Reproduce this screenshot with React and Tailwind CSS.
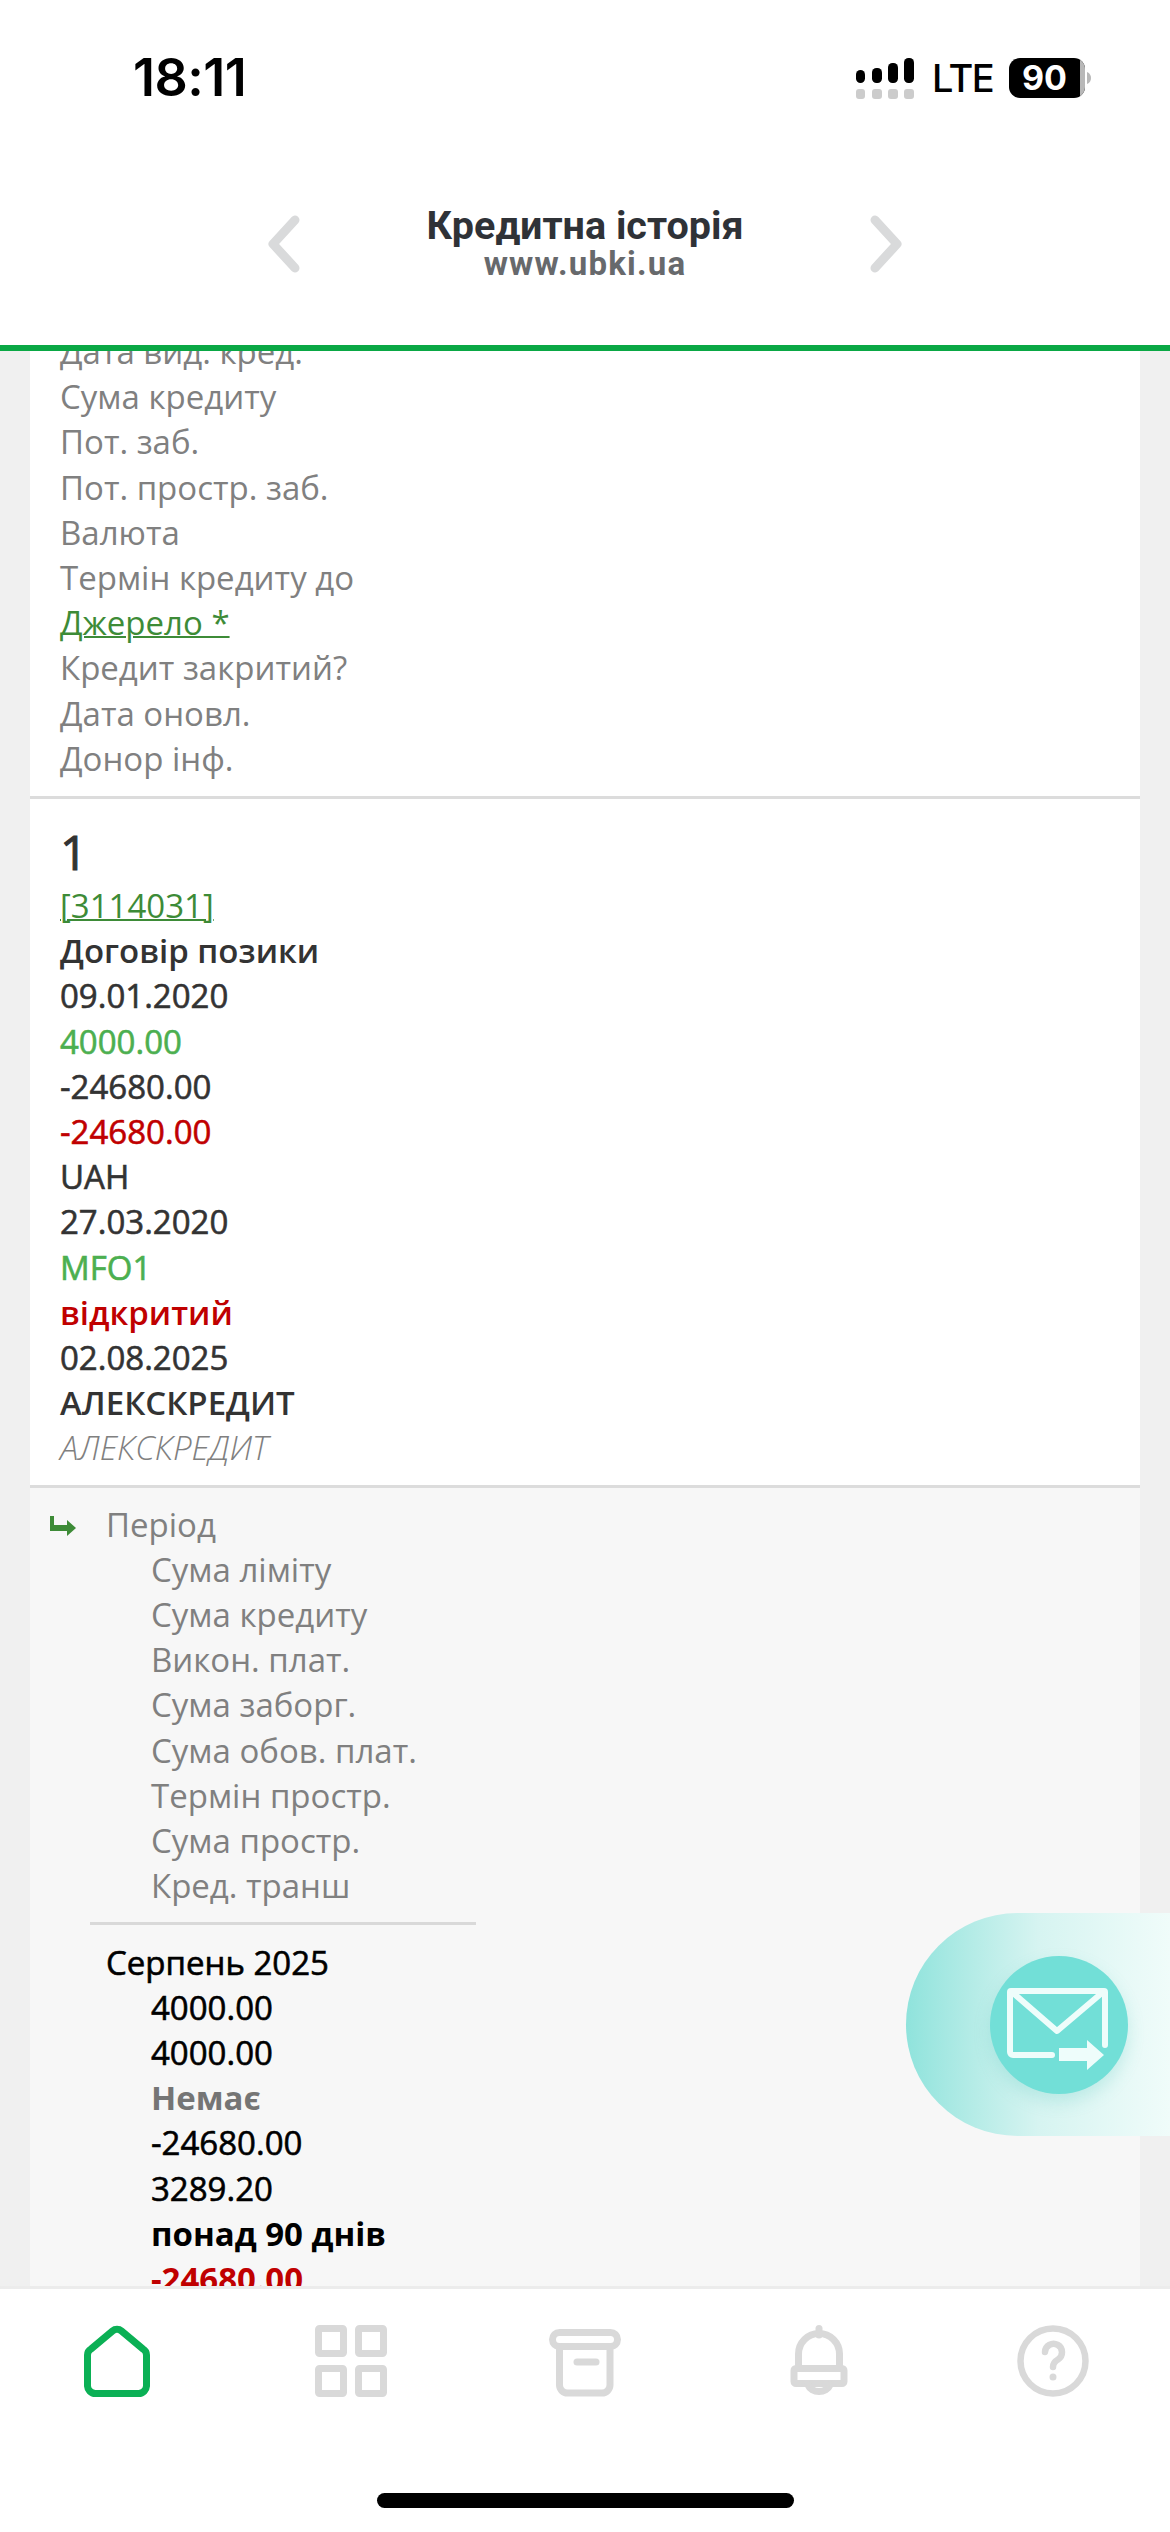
import React from 'react';

// Open Sans only comes in static weights here, so the medium look of the values uses a thin stroke
const creditValue = '[-webkit-text-stroke:0.6px]';

const labels = ['Дата вид. кред.', 'Сума кредиту', 'Пот. заб.', 'Пот. простр. заб.', 'Валюта', 'Термін кредиту до'];
const labelsEnd = ['Кредит закритий?', 'Дата оновл.', 'Донор інф.'];

const creditRows = [
    { text: 'Договір позики', cls: 'font-semibold text-[#333333]' },
    { text: '09.01.2020', cls: `${creditValue} text-[#333333]` },
    { text: '4000.00', cls: `${creditValue} text-[#4caf50]` },
    { text: '-24680.00', cls: `${creditValue} text-[#333333]` },
    { text: '-24680.00', cls: `${creditValue} text-[#c00000]` },
    { text: 'UAH', cls: `${creditValue} text-[#333333]` },
    { text: '27.03.2020', cls: `${creditValue} text-[#333333]` },
    { text: 'MFO1', cls: `${creditValue} text-[#4caf50]` },
    { text: 'відкритий', cls: 'font-semibold text-[#c00000]' },
    { text: '02.08.2025', cls: `${creditValue} text-[#333333]` },
    { text: 'АЛЕКСКРЕДИТ', cls: 'font-semibold text-[#333333]' },
    { text: 'АЛЕКСКРЕДИТ', cls: 'font-light italic text-[#808080]' },
];

const periodLabels = ['Сума ліміту', 'Сума кредиту', 'Викон. плат.', 'Сума заборг.', 'Сума обов. плат.', 'Термін простр.', 'Сума простр.', 'Кред. транш'];

const periodValues = [
    { text: '4000.00', cls: `${creditValue} text-black` },
    { text: '4000.00', cls: `${creditValue} text-black` },
    { text: 'Немає', cls: 'font-bold text-[#757575]' },
    { text: '-24680.00', cls: `${creditValue} text-black` },
    { text: '3289.20', cls: `${creditValue} text-black` },
    { text: 'понад 90 днів', cls: 'font-bold text-black' },
    { text: '-24680.00', cls: 'font-bold text-[#c00000]' },
];

const StatusBar = () => (
    <div className="h-[156px] flex items-center justify-between pl-[133px] pr-[79px] font-['Inter',sans-serif] text-black">
        <span className="text-[52px] font-semibold tracking-[-0.5px] leading-none">18:11</span>
        <div className="flex items-center">
            <svg width="58" height="41" viewBox="0 0 58 41">
                <rect x="0" y="12" width="9" height="13" rx="4.5" fill="#000" />
                <rect x="16" y="10" width="10" height="15" rx="4.5" fill="#000" />
                <rect x="32" y="5" width="10" height="20" rx="4.5" fill="#000" />
                <rect x="48" y="0" width="10" height="25" rx="4.5" fill="#000" />
                <rect x="0" y="31" width="9" height="10" rx="3" fill="#cccccc" />
                <rect x="16" y="31" width="10" height="10" rx="3" fill="#cccccc" />
                <rect x="32" y="31" width="10" height="10" rx="3" fill="#cccccc" />
                <rect x="48" y="31" width="10" height="10" rx="3" fill="#cccccc" />
            </svg>
            <span className="ml-[18px] w-[58px] text-[38px] font-medium leading-none tracking-[-1.5px]">LTE</span>
            <div className="ml-[19px] flex items-center">
                <div className="w-[76px] h-[40px] rounded-[11px] bg-black overflow-hidden flex">
                    <span className="w-[71px] text-center text-white text-[34px] font-bold leading-[40px]">90</span>
                    <span className="w-[5px] bg-[#b8b8b8]"></span>
                </div>
                <svg className="ml-[2px]" width="4" height="12" viewBox="0 0 4 12">
                    <path d="M0 0 C3 1 4 4 4 6 C4 8 3 11 0 12 Z" fill="#b8b8b8" />
                </svg>
            </div>
        </div>
    </div>
);

const Chevron = ({ d }) => (
    <svg width="34" height="58" viewBox="0 0 34 58" fill="none">
        <path d={d} stroke="#d9dadb" strokeWidth="9" strokeLinecap="round" strokeLinejoin="round" />
    </svg>
);

const HomeIcon = () => (
    <svg width="66" height="72" viewBox="0 0 66 72" fill="none">
        <path d="M28.5 6 a7 7 0 0 1 9 0 L59 24 a7 7 0 0 1 3.5 6 V60 a8 8 0 0 1 -8 8.5 H11.5 a8 8 0 0 1 -8 -8.5 V30 a7 7 0 0 1 3.5 -6 Z" stroke="#0bb055" strokeWidth="7" strokeLinejoin="round" />
    </svg>
);

const GridIcon = () => (
    <svg width="72" height="72" viewBox="0 0 72 72" fill="none" stroke="#d9d9d9" strokeWidth="7">
        <rect x="3.5" y="3.5" width="25" height="25" rx="1" />
        <rect x="43.5" y="3.5" width="25" height="25" rx="1" />
        <rect x="3.5" y="43.5" width="25" height="25" rx="1" />
        <rect x="43.5" y="43.5" width="25" height="25" rx="1" />
    </svg>
);

const ArchiveIcon = () => (
    <svg width="72" height="72" viewBox="0 0 72 72" fill="none" stroke="#d9d9d9" strokeWidth="7" strokeLinecap="round">
        <rect x="3.5" y="7.5" width="65" height="14" rx="7" />
        <path d="M10.5 22 V60 a8 8 0 0 0 8 8 H53 a8 8 0 0 0 8 -8 V22" />
        <path d="M28 37 H47" />
    </svg>
);

const BellIcon = () => (
    <svg width="72" height="72" viewBox="0 0 72 72" fill="none" stroke="#d9d9d9" strokeWidth="7" strokeLinecap="round" strokeLinejoin="round">
        <path d="M36 3.5 V10" />
        <path d="M15.5 41 V29 a20.5 20.5 0 0 1 41 0 V41" />
        <rect x="11" y="43.5" width="50" height="15" rx="2" />
        <path d="M25 60 a11.5 9 0 0 0 22 0" />
    </svg>
);

const HelpIcon = () => (
    <svg width="72" height="72" viewBox="0 0 72 72" fill="none" stroke="#d9d9d9" strokeWidth="6.5" strokeLinecap="round">
        <circle cx="36" cy="36" r="32.5" />
        <path d="M28 27 a8.5 8.5 0 1 1 13 7.5 c-3.5 2 -5 4 -5 7.5" />
        <circle cx="36" cy="52" r="1.5" fill="#d9d9d9" strokeWidth="4" />
    </svg>
);

const App = () => {
    return (
        <div className="relative w-[1170px] h-[2532px] overflow-hidden flex flex-col bg-white font-['Open_Sans',sans-serif] text-[33px] leading-[45.2px]">
            {/* Header */}
            <header className="relative z-10 h-[351px] shrink-0 bg-white border-b-[6px] border-[#0aa845]">
                <StatusBar />
                <div className="mt-[59px] mx-auto w-[636px] h-[58px] flex items-center justify-between">
                    <Chevron d="M28 5 L6 29 L28 53" />
                    <div className="text-center font-['Roboto',sans-serif] font-bold">
                        <div className="text-[39.5px] leading-[40px] text-[#2f3237] whitespace-nowrap">Кредитна історія</div>
                        <div className="text-[33px] leading-[36px] tracking-[1.2px] text-[#67696c]">www.ubki.ua</div>
                    </div>
                    <Chevron d="M6 5 L28 29 L6 53" />
                </div>
            </header>

            {/* Scrolled content */}
            <main className="flex-1 min-h-0 overflow-hidden bg-[#f0f0f0] px-[30px]">
                <div className="-mt-[22px]">
                    <section className="bg-white pl-[30px] pb-[15px] border-b-[3px] border-[#dcdcdc] text-[#808080]">
                        {labels.map((label, i) => <div key={i}>{label}</div>)}
                        <div className="text-[#3d8b37] underline decoration-2">Джерело *</div>
                        {labelsEnd.map((label, i) => <div key={i}>{label}</div>)}
                    </section>

                    <section className="bg-white pl-[30px] pb-[14px] border-b-[3px] border-[#dcdcdc]">
                        <div className="pt-[22px] text-[48px] [-webkit-text-stroke:1px] leading-[62px] text-[#333333]">1</div>
                        <div className="text-[#3d8b37] underline decoration-2">[3114031]</div>
                        {creditRows.map((row, i) => <div key={i} className={row.cls}>{row.text}</div>)}
                    </section>

                    <section className="bg-[#f7f7f7] pl-[20px] pt-[14px]">
                        <div className="flex">
                            <svg className="mt-[14px] shrink-0" width="26" height="20" viewBox="0 0 26 20" fill="#3d8b37">
                                <path d="M0 0 H4 V9 H17 V4 L26 12 L17 20 V15 H0 Z" />
                            </svg>
                            <div className="ml-[30px] text-[#808080]">
                                <div>Період</div>
                                {periodLabels.map((label, i) => <div key={i} className="pl-[45px]">{label}</div>)}
                            </div>
                        </div>
                        <div className="ml-[40px] w-[386px] mt-[13px] h-[3px] bg-[#d9d9d9]"></div>
                        <div className="ml-[56px] pt-[15px] text-black">
                            <div className={creditValue}>Серпень 2025</div>
                            {periodValues.map((row, i) => <div key={i} className={`pl-[45px] ${row.cls}`}>{row.text}</div>)}
                        </div>
                    </section>
                </div>
            </main>

            {/* Bottom navigation */}
            <nav className="relative z-10 h-[246px] shrink-0 bg-white border-t-[3px] border-[#ececec] flex flex-col">
                <div className="mt-[36px] grid grid-cols-5 justify-items-center">
                    <HomeIcon />
                    <GridIcon />
                    <ArchiveIcon />
                    <BellIcon />
                    <HelpIcon />
                </div>
                <div className="mt-auto mb-[24px] mx-auto w-[417px] h-[15px] rounded-full bg-black"></div>
            </nav>

            {/* Floating mail button */}
            <div className="absolute z-20 left-[906px] top-[1913px] w-[264px] h-[223px] rounded-l-[112px] bg-gradient-to-r from-[#8fe3dc] via-[#d6f4f1] to-[#f0fcfa]">
                <div className="absolute left-[84px] top-[43px] w-[138px] h-[138px] rounded-full bg-[#72dfd7] shadow-[0_8px_16px_rgba(90,200,190,0.25)]">
                    <svg width="138" height="138" viewBox="0 0 138 138" fill="none">
                        <path d="M62 99 H23 a3 3 0 0 1 -3 -3 V36 a1 1 0 0 1 1 -1 H114 a1 1 0 0 1 1 1 V89" stroke="#eefdfb" strokeWidth="6" strokeLinecap="round" strokeLinejoin="round" />
                        <path d="M22 36 L67 75 L113 36" stroke="#eefdfb" strokeWidth="6" strokeLinecap="round" strokeLinejoin="round" />
                        <path d="M69 92 H97 V84 L114 99 L97 114 V105 H69 Z" fill="#eefdfb" />
                    </svg>
                </div>
            </div>
        </div>
    );
};

export default App;
